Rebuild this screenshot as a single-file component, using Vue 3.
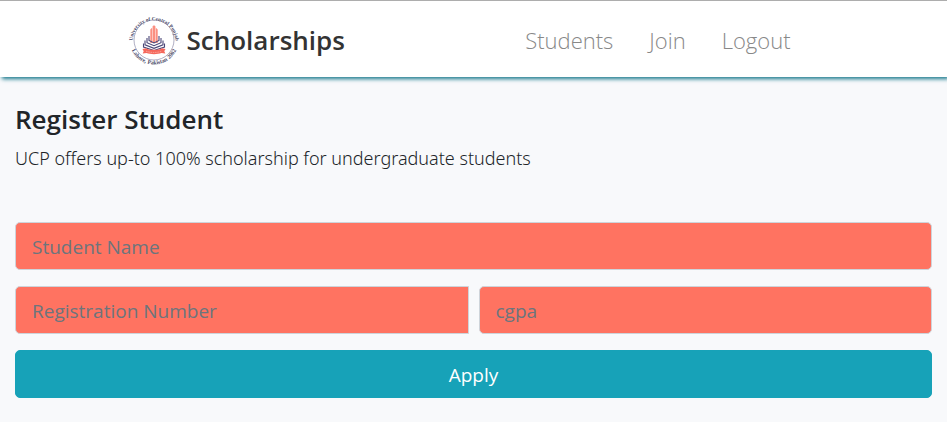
<script setup>
import { ref } from 'vue'

const links = ['Students', 'Join', 'Logout']
const studentName = ref('')
const registration = ref('')
const cgpa = ref('')
</script>

<template>
  <header class="navbar">
    <div class="container">
      <a class="brand" href="#">
        <svg class="logo" viewBox="0 0 48 50" aria-hidden="true">
          <defs>
            <path id="arc-top" d="M2.500 27 A21.500 21.500 0 0 1 45.500 27" />
            <path id="arc-bottom" d="M-0.500 25 A24.500 24.500 0 0 0 48.500 25" />
          </defs>
          <circle cx="24" cy="25" r="20" fill="#fff" stroke="#9c9bb4" stroke-width="0.8" />
          <text class="seal" font-size="5.200"><textPath href="#arc-top" startOffset="50%" text-anchor="middle">University of Central Punjab</textPath></text>
          <text class="seal" font-size="5.800"><textPath href="#arc-bottom" startOffset="50%" text-anchor="middle">Lahore, Pakistan 2002</textPath></text>
          <path d="M20.300 28V14.500l1.800-1.800V28zM22.600 28V11.200l1.400-1 1.400 1V28zM25.900 28V12.700l1.800 1.800V28z" fill="#fb8f80" />
          <g fill="none" stroke="#4b4778" stroke-width="1.100">
            <path d="M19 21v4.500l5 2.500 5-2.500V21" />
            <path d="M17 23v4.700l7 3 7-3V23" />
            <path d="M15 25.500v4.300l9 3.500 9-3.500v-4.300" />
            <path d="M13.500 28.500v3.500l10.500 3.400L34.500 32v-3.500" />
          </g>
          <path d="M12.500 34l3.500-.8c3 2 13 2 16 0l3.500.8-1.200 2.200 1 2.200-3.800-.4c-4 1.500-11 1.500-15 0l-3.800.4 1-2.200z" fill="#f5685c" />
          <path d="M16 36.200q8 2.500 16 0" fill="none" stroke="#fbc0b8" stroke-width="0.700" stroke-dasharray="1.500 0.800" />
        </svg>
        <span>Scholarships</span>
      </a>
      <nav class="links">
        <a v-for="link in links" :key="link" href="#">{{ link }}</a>
      </nav>
    </div>
  </header>

  <main class="content">
    <h1>Register Student</h1>
    <p class="lead">UCP offers up-to 100% scholarship for undergraduate students</p>
    <form @submit.prevent>
      <input v-model="studentName" type="text" placeholder="Student Name" aria-label="Student Name" />
      <div class="row">
        <input v-model="registration" class="square-end" type="text" placeholder="Registration Number" aria-label="Registration Number" />
        <input v-model="cgpa" type="text" placeholder="cgpa" aria-label="cgpa" />
      </div>
      <button type="submit">Apply</button>
    </form>
  </main>
</template>

<style>
body {
  margin: 0;
  background: #f8f9fb;
  color: #212529;
  font-family: "Open Sans", "Noto Sans", sans-serif;
}
</style>

<style scoped>
.navbar {
  padding: 14px 0 12px;
  border-top: 1px solid #adadad;
  background: #fff;
  box-shadow: 2px 2px 4px #17788c;
}

.container {
  display: flex;
  align-items: center;
  justify-content: space-between;
  box-sizing: border-box;
  max-width: 720px;
  margin: 0 auto;
  padding: 0 16px;
}

.brand {
  display: flex;
  align-items: center;
  gap: 9px;
  color: #333;
  font-size: 26px;
  font-weight: 600;
  line-height: 40px;
  text-decoration: none;
}

.logo {
  width: 48px;
  height: 50px;
  overflow: visible;
}

.seal {
  fill: #4b4a68;
  font-family: "Liberation Serif", serif;
  font-weight: 700;
}

.links {
  display: flex;
  gap: 36px;
  padding-right: 27px;
}

.links a {
  color: #888;
  font-size: 22px;
  font-weight: 300;
  line-height: 32px;
  text-decoration: none;
}

.content {
  padding: 24px 15px;
}

h1 {
  margin: 0 0 7px;
  font-size: 26px;
  font-weight: 600;
  line-height: 36px;
}

.lead {
  margin: 0 0 50px;
  font-family: "Noto Sans", "Open Sans", sans-serif;
  font-size: 18px;
  font-weight: 300;
  line-height: 28px;
}

form {
  display: grid;
  gap: 16px;
}

.row {
  display: grid;
  grid-template-columns: 1fr 1fr;
  gap: 10px;
}

input,
button {
  box-sizing: border-box;
  width: 100%;
  min-width: 0;
  height: 48px;
  margin: 0;
  padding: 9px 16px 7px;
  border-radius: 5px;
  font-family: inherit;
  font-size: 19px;
  line-height: 30px;
}

input {
  border: 1px solid #ced4da;
  background: #ff7361;
  color: #495057;
}

input::placeholder {
  color: #6c757d;
  opacity: 1;
}

.square-end {
  border-top-right-radius: 0;
  border-bottom-right-radius: 0;
}

button {
  border: 1px solid #17a2b8;
  background: #17a2b8;
  color: #fff;
  cursor: pointer;
}
</style>
